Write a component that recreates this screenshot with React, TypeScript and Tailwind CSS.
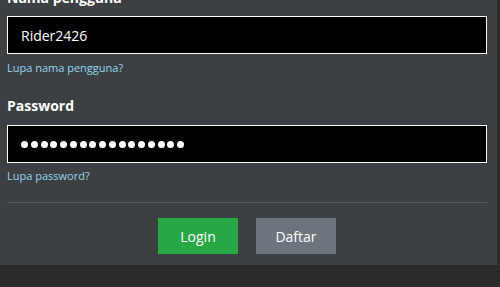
import React from "react";

export default function App() {
  const font = { fontFamily: '"Open Sans", "Noto Sans", sans-serif' };
  const dots = Array.from({ length: 17 });

  return (
    <div className="w-[500px] h-[287px] overflow-hidden bg-[#2a2a2a] flex" style={font}>
      <div className="w-[497px] h-[265px] bg-[#3c4043] px-[7px] pr-[10px] flex flex-col">
        <div className="-mt-[12px] h-[20px] text-[14px] leading-[20px] font-bold text-white">
          Nama pengguna
        </div>

        <div className="mt-[8px] h-[38px] border border-white bg-black flex items-center px-[13px] text-[14px] text-white">
          Rider2426
        </div>
        <a className="mt-[6px] text-[11px] leading-[16px] text-[#9ad3f0]">
          Lupa nama pengguna?
        </a>

        <div className="mt-[20px] h-[20px] text-[14px] leading-[20px] font-bold text-white">
          Password
        </div>
        <div className="mt-[9px] h-[38px] border border-white bg-black flex items-center gap-[2.75px] px-[13px]">
          {dots.map((_, i) => (
            <span key={i} className="w-[7px] h-[7px] rounded-full bg-white" />
          ))}
        </div>
        <a className="mt-[5px] text-[11px] leading-[16px] text-[#9ad3f0]">
          Lupa password?
        </a>

        <div className="mt-[18px] border-t border-[#55595c]" />

        <div className="mt-[15px] flex justify-center gap-[18px]">
          <button className="w-[80px] h-[36px] bg-[#28a745] text-white text-[14px]">
            Login
          </button>
          <button className="w-[80px] h-[36px] bg-[#6c757d] text-white text-[14px]">
            Daftar
          </button>
        </div>
      </div>
    </div>
  );
}
